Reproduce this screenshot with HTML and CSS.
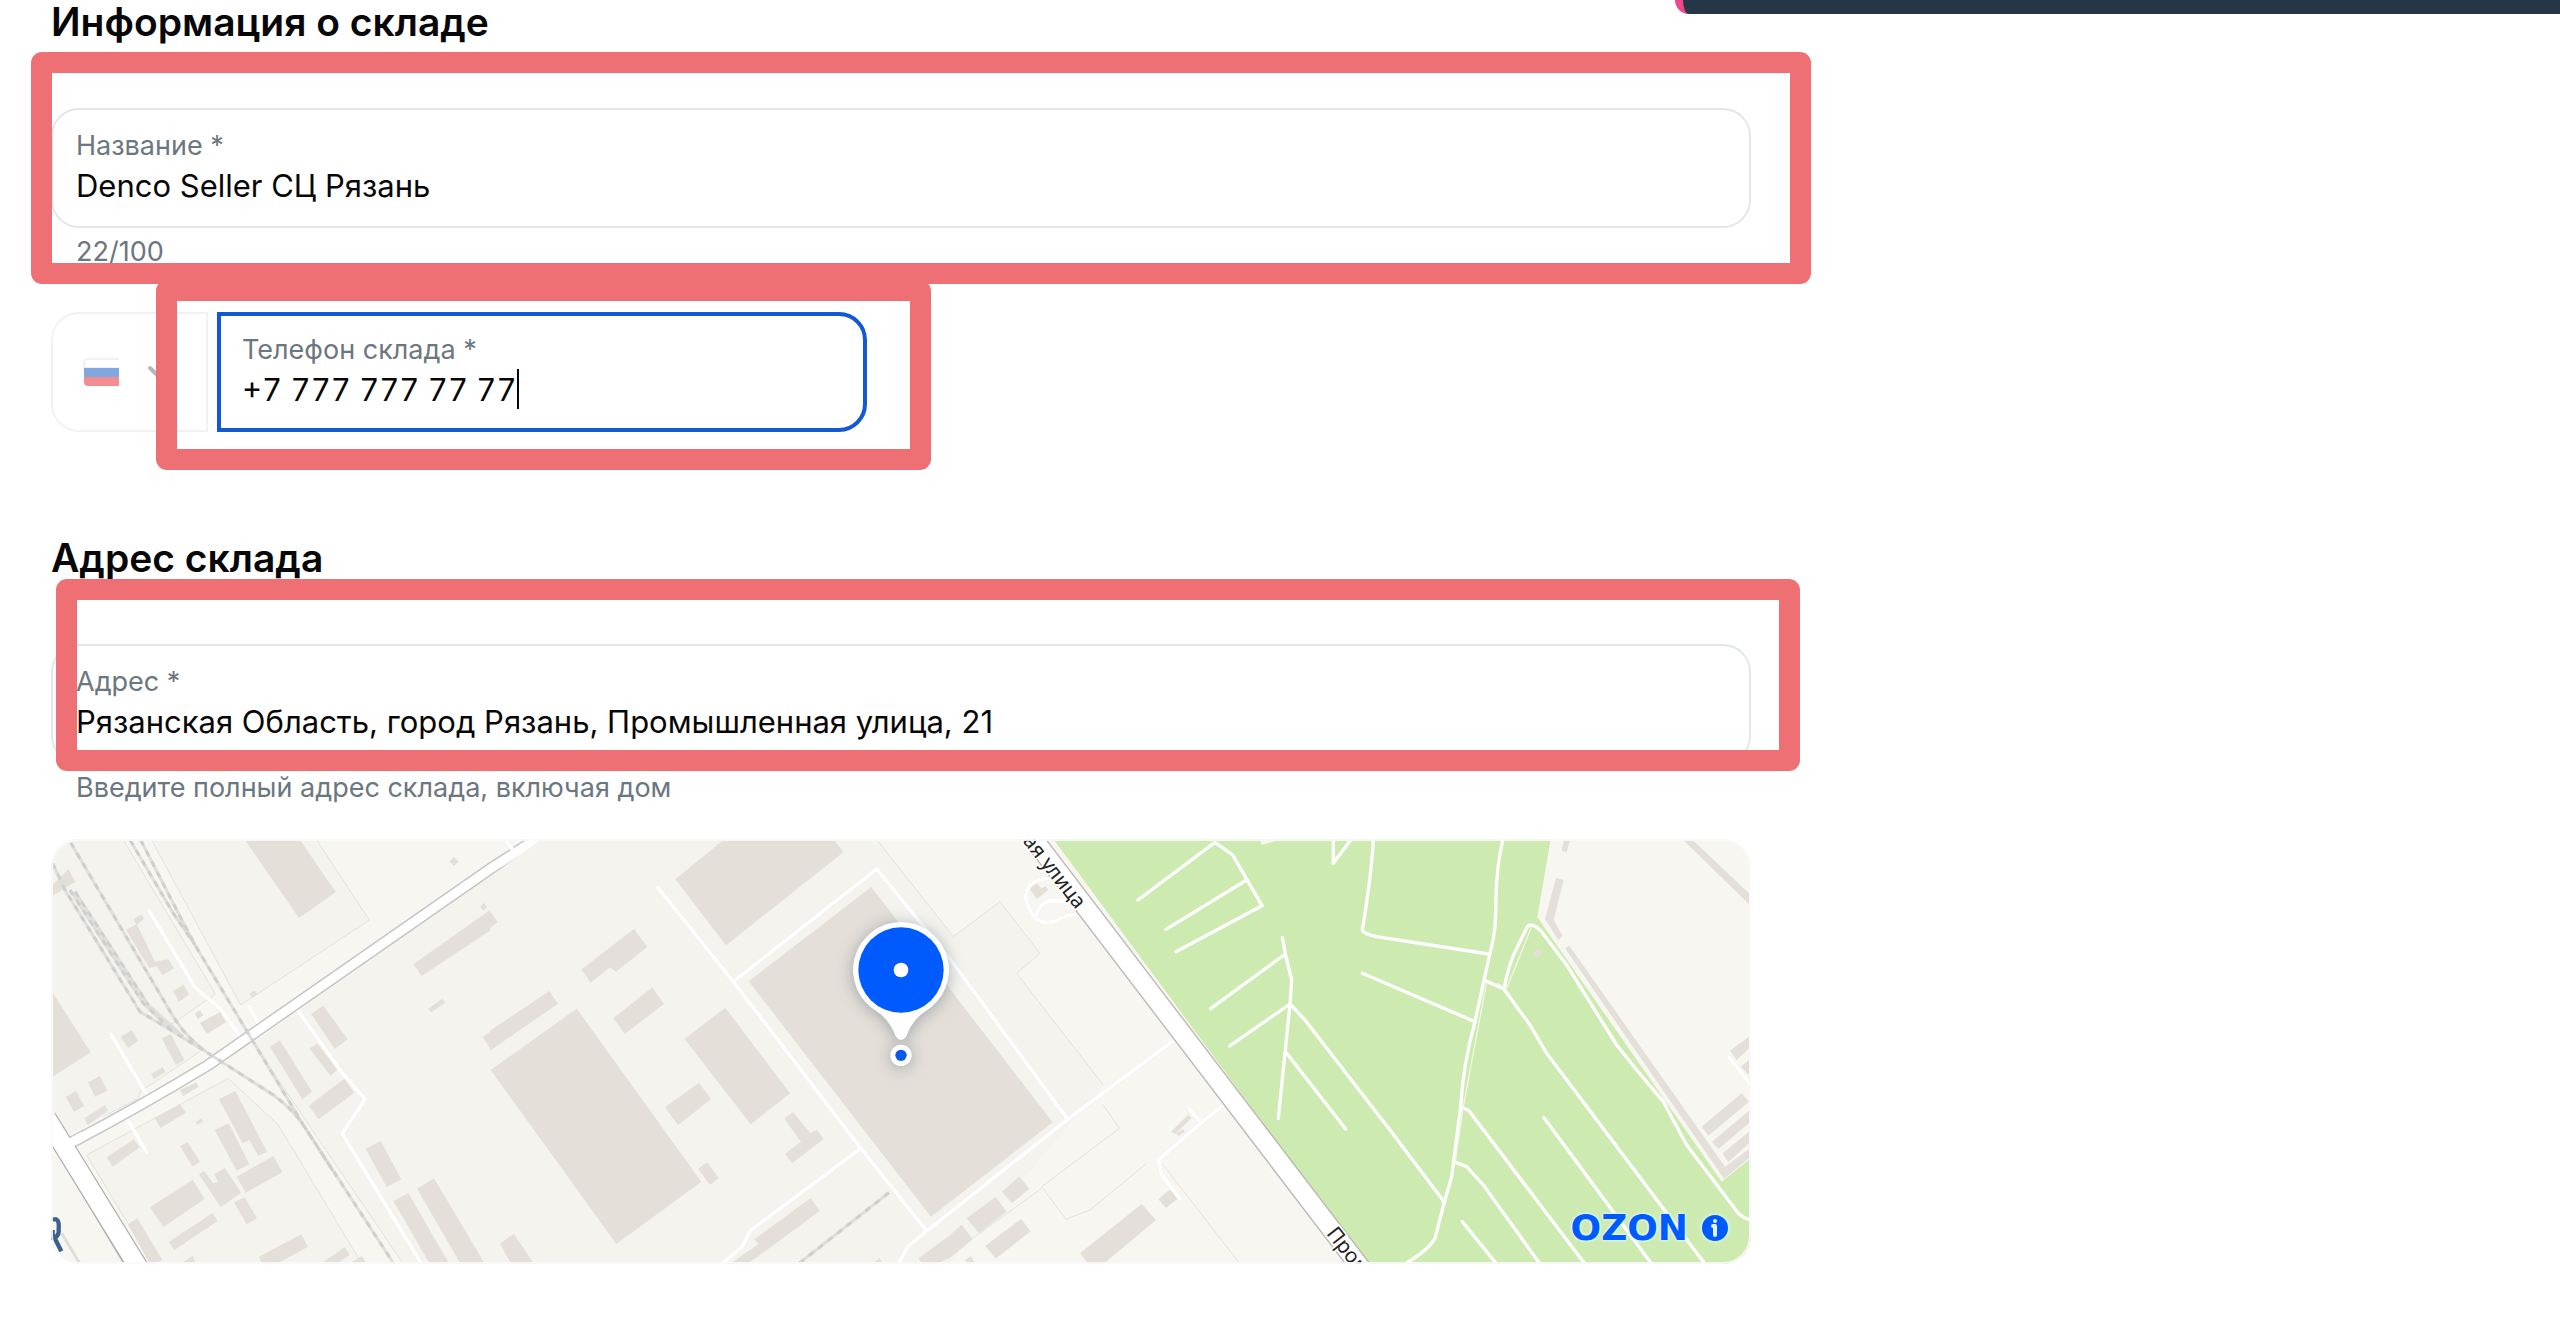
FILE: index.html
```
<!DOCTYPE html>
<html lang="ru">
<head>
    <meta charset="UTF-8">
    <meta name="viewport" content="width=device-width, initial-scale=1.0">
    <title>Информация о складе</title>
    <link rel="stylesheet" href="styles.css">
</head>
<body>
    <div class="toast"></div>

    <main class="warehouse">
        <section class="info">
            <h2>Информация о складе</h2>

            <div class="name-block">
                <div class="field">
                    <label for="name">Название *</label>
                    <input type="text" id="name" value="Denco Seller СЦ Рязань">
                </div>
                <p class="hint">22/100</p>
                <div class="mark mark-name"></div>
            </div>

            <div class="phone-row">
                <button type="button" class="country" aria-label="Код страны">
                    <svg class="flag" viewBox="0 0 36 28">
                        <path d="M36 1H5Q1 1 1 5V10H36" fill="#fff" stroke="#e3e8ec" stroke-width="2"/>
                        <rect x="1" y="10" width="35" height="9" fill="#0551c3"/>
                        <path d="M1 19H36V28H5Q1 28 1 24Z" fill="#ea1e28"/>
                    </svg>
                    <svg class="chevron" viewBox="0 0 22 14">
                        <path d="M3 3L11 11L19 3" fill="none" stroke="#6a747c" stroke-width="4" stroke-linecap="round"/>
                    </svg>
                </button>
                <div class="field phone">
                    <label for="phone">Телефон склада *</label>
                    <div class="phone-value">
                        <input type="tel" id="phone" value="+7 777 777 77 77">
                        <span class="caret"></span>
                    </div>
                </div>
                <div class="mark mark-phone"></div>
            </div>
        </section>

        <section class="address">
            <h2>Адрес склада</h2>

            <div class="address-block">
                <div class="field">
                    <label for="address">Адрес *</label>
                    <input type="text" id="address" value="Рязанская Область, город Рязань, Промышленная улица, 21">
                </div>
                <div class="mark mark-address"></div>
            </div>
            <p class="hint">Введите полный адрес склада, включая дом</p>

            <div class="map">
                <svg class="map-canvas" viewBox="33 27 5100 1275" preserveAspectRatio="xMidYMid slice">
                    <!-- west: rail yard and old quarter -->
                    <g>
                        <path class="lot" d="M33 27H250L526 492L400 580L480 665L300 785L295 805L90 912L33 845Z"/>
                        <path class="lot" d="M335 27H830L988 270L602 525Z"/>
                        <path class="lot" d="M140 975L565 745L715 885L965 1302H330Z"/>
                        <path class="lot" d="M640 640L1350 130H1800V1302H1090Z"/>
                        <path class="lot-line" d="M250 30L526 492L400 580Q370 580 350 560M335 30L602 525L988 270L830 30M480 665L300 785L295 805L190 860M140 975L565 745L715 885L965 1300M140 975L330 1290M640 640L1090 1302"/>
                        <path class="house" d="M615 30H780L887 186L777 264ZM38 165L85 118L106 155L38 197ZM38 488L152 667L38 740ZM258 300L290 282L345 395L370 390L385 388L402 415L368 436L350 408L328 415ZM280 268L304 253L312 266L290 285ZM399 483L430 464L447 492L417 516ZM464 550L480 541L490 556L474 568ZM480 578L540 547L558 577L500 612ZM243 620L275 600L295 632L264 655ZM365 625L392 612L433 690L408 706ZM333 732L368 712L376 726L342 748ZM144 757L180 738L202 782L165 800ZM77 801L108 782L132 828L102 845ZM133 865L195 825L204 842L143 886ZM420 780L468 757L476 770L430 798ZM344 865L420 822L438 848L362 893ZM466 876L484 865L489 874L474 884ZM628 492L644 481L652 492L637 504ZM537 808L586 783L681 965L655 978L628 930L608 940ZM524 900L566 880L628 1003L590 1022ZM420 948L443 937L480 995L458 1010ZM200 982L282 928L299 952L218 1010ZM590 1040L700 978L727 1027L617 1088ZM477 1033L492 1023L520 1060L535 1055L522 1032L555 1015L603 1088L542 1132ZM582 1117L614 1102L651 1165L620 1183ZM330 1132L458 1049L494 1107L370 1191ZM387 1235L518 1149L533 1173L402 1261ZM264 1182L292 1165L367 1290L345 1302H330ZM657 1280L784 1213L804 1250L710 1302H665ZM845 1300L914 1252L930 1275L890 1302ZM425 1300L458 1277L468 1300ZM930 1300L965 1278L980 1300ZM690 650L720 631L816 785L787 808ZM808 655L832 641L893 718L872 738ZM813 551L850 527L923 628L884 656ZM806 827L913 746L943 788L836 868ZM1120 403L1350 240V302L1145 438ZM1164 537L1207 506L1216 518L1174 547ZM1228 95L1242 81L1256 95L1242 108ZM1320 230L1332 219L1342 232L1330 242ZM977 957L1022 933L1084 1048L1040 1071ZM1060 1113L1105 1089L1228 1302H1170ZM1131 1076L1182 1045L1335 1302H1262ZM1328 620L1373 590L1385 610L1350 655Z"/>
                        <path class="lane" d="M328 243L465 472L545 540L600 620M213 613L325 802M260 865L320 966M627 530L655 580M768 533L903 725L975 807L907 911L1145 1302"/>
                        <path class="road-edge" d="M33 905L275 1310M90 940Q300 830 505 705L1350 117L1500 20"/>
                        <path class="road-fill" d="M90 940Q300 830 505 705L1350 117L1500 20"/>
                        <path class="road-wide-edge" d="M20 865L300 1320"/>
                        <path class="road-wide" d="M20 865L300 1320"/>
                        <path class="road-fill" d="M70 950L130 918"/>
                        <path class="rail" d="M92 38L400 560Q440 625 505 670M270 30L400 250L465 345M302 30L410 240L465 345L790 885L1062 1302M38 100L75 180L300 545L400 605L505 670L700 795Q760 840 790 885L890 1040M90 180L310 520L400 605M105 185L325 525L430 620M65 1210L120 1302"/>
                        <path class="rail-dash" d="M92 38L400 560Q440 625 505 670M270 30L400 250L465 345M302 30L410 240L465 345L790 885L1062 1302M38 100L75 180L300 545L400 605L505 670L700 795Q760 840 790 885L890 1040M90 180L310 520L400 605M105 185L325 525"/>
                        <path d="M33 1168H48Q58 1172 56 1195V1205Q56 1222 33 1224M42 1220L64 1264M38 1200V1230" fill="none" stroke="#3b628f" stroke-width="13"/>
                    </g>

                    <!-- centre: warehouses -->
                    <g transform="translate(1350 0)">
                        <path class="lot" d="M0 140L150 30H1165L1390 320L1530 215L1650 370L1580 430L1840 765L1380 1302H0Z"/>
                        <path class="lot-line" d="M1165 35L1390 320L1530 215L1650 370L1580 430L1840 765"/>
                        <path class="house" d="M556 148L700 30H1032L1060 67L708 346ZM776 454L1144 171L1688 877L1323 1160ZM2 720L260 536L634 1055L379 1242ZM584 627L706 533L900 790L782 883ZM275 418L432 297L472 351L378 425L360 412L302 458ZM370 565L487 472L522 522L404 612ZM525 832L627 758L663 808L564 885ZM0 602L178 483L204 521L0 662ZM0 243L23 276L0 294ZM624 1016L652 997L686 1045L660 1064ZM883 866L909 846L960 910L981 899L1001 927L906 1000L885 971L933 935ZM793 1228L962 1104L989 1143L800 1282L770 1302H720L805 1242ZM30 1241L71 1211L132 1302H64ZM1286 1285L1380 1215L1415 1184L1448 1228L1380 1283L1340 1302H1295ZM1430 1165L1517 1101L1550 1145L1467 1209ZM1536 1085L1588 1040L1618 1076L1566 1120ZM1486 1247L1593 1167L1622 1204L1517 1286ZM1770 1270L1955 1122L1998 1170L1840 1302H1795ZM2005 1108L2040 1078L2065 1105L2028 1134ZM2043 905L2095 854L2105 864L2055 912ZM2058 910L2080 897L2085 905L2065 918ZM1618 175L1640 160L1655 175L1668 168L1675 180L1640 207ZM1425 1290L1443 1278L1455 1302H1430ZM1155 1295L1168 1285L1180 1300Z"/>
                        <path class="lane" d="M503 172L730 455L1112 955L1310 1203M730 455L1160 117L1390 400L1733 868M1112 955L780 1203L757 1250L695 1302M1225 1302L1255 1248L1310 1203L1733 868L2055 628M50 35L65 55"/>
                        <path class="rail" d="M1197 1088L925 1302"/>
                        <path class="rail-dash" d="M1197 1088L925 1302"/>
                        <path class="lot-line" d="M1840 825L1888 895L1655 1070L1728 1168L1800 1140L1970 1000M2020 1005L2250 1302M1655 1075L1400 1260"/>
                    </g>

                    <!-- Промышленная улица and the park -->
                    <g transform="translate(2700 0)">
                        <path class="park" d="M340 27L1280 1302H2433V985L2345 1055L1792 262L1832 27Z"/>
                        <path class="lane" d="M330 145Q255 150 258 205Q262 240 290 268Q320 285 350 272Q385 250 420 253M285 262Q300 220 325 213H385M850 825L790 873L655 990L665 1035L720 1106M748 838L785 878"/>
                        <path class="street-edge" d="M260 0L1275 1330"/>
                        <path class="street" d="M260 0L1275 1330"/>
                        <path class="path" d="M594 210L825 37L878 75L966 227L708 365M920 150L678 298M1027 322L1036 372L1055 450L1050 522L1015 865M1036 372L812 536M1050 522L869 648M1050 522L1095 570L1350 900L1512 1115M1040 670L1217 897M1300 27Q1295 130 1267 300Q1270 312 1310 320L1645 372M1267 430L1605 575M1180 100L1232 30M1180 100V30"/>
                        <path fill="#f7f6f1" d="M960 30H1015L965 45Z"/>
                    </g>
                    <g transform="translate(3900 0)">
                        <path class="house" d="M665 62L672 30H690L680 67ZM648 143L671 150L641 270L668 318L655 330L615 268ZM1030 30H1058L1227 190V223ZM675 355L688 347L1155 1010L1227 957V985L1152 1046ZM578 370L596 357L607 370L590 385ZM1085 890L1205 790L1227 815L1105 917ZM1116 935L1227 842V880L1135 957ZM1148 970L1227 905V940L1165 997ZM1170 662L1227 620V655L1190 690ZM1202 710L1227 690V735Z"/>
                        <path class="lane" d="M1168 683L1230 762"/>
                        <path class="path" d="M488 30Q470 110 468 200Q468 290 458 335L432 450L405 575Q370 700 362 830L335 1040L312 1120L285 1225Q265 1260 195 1302M432 450L492 478Q505 400 535 345L562 290Q575 275 605 305L680 405L830 645L890 720L970 815L1040 945L1195 1150Q1215 1168 1230 1168M492 478L570 585L620 670L1095 1302M362 832L385 840L735 1302M340 995L380 1010L430 1065L600 1302M612 863L935 1302M367 1175L470 1302"/>
                        <path d="M440 455L370 830L345 1000M575 290L500 475L470 460" fill="none" stroke="#f1f6e6" stroke-width="4"/>
                    </g>
                    <g class="street-name">
                        <text transform="translate(3108 240) rotate(52)" text-anchor="end">Промышленная улица</text>
                        <text transform="translate(3857 1211) rotate(52)">Промышленная улица</text>
                    </g>
                </svg>

                <svg class="pin" viewBox="0 0 330 480">
                    <path d="M165 27A144 144 0 0 1 238 295C210 315 195 335 181 370Q165 392 149 370C135 335 120 315 92 295A144 144 0 0 1 165 27Z" fill="#fff"/>
                    <circle cx="165" cy="171" r="128" fill="#005bff"/>
                    <circle cx="165" cy="171" r="22" fill="#fff"/>
                    <circle cx="165" cy="427" r="32" fill="#fff"/>
                    <circle cx="165" cy="427" r="17" fill="#0a58e6"/>
                </svg>

                <div class="copyright">
                    <a href="#" class="ozon">OZON</a>
                    <button type="button" class="about" aria-label="О карте">
                        <svg viewBox="0 0 26 26">
                            <circle cx="13" cy="13" r="13" fill="#005bff"/>
                            <circle cx="13" cy="6" r="2" fill="#dff6ee"/>
                            <path d="M11 11H13V20" fill="none" stroke="#dff6ee" stroke-width="4" stroke-linecap="round" stroke-linejoin="round"/>
                        </svg>
                    </button>
                </div>
            </div>
        </section>
    </main>
</body>
</html>
```
FILE: styles.css
```
* {
    margin: 0;
    padding: 0;
    box-sizing: border-box;
}

body {
    font-family: Inter, 'Noto Sans', sans-serif;
    background: #fff;
    color: #070707;
    position: relative;
    overflow-x: hidden;
}

.toast {
    position: absolute;
    top: 0;
    right: 0;
    left: 1675px;
    height: 14px;
    background: #253647;
    border-left: 8px solid #f0468c;
    border-radius: 0 0 0 14px;
}

.warehouse {
    max-width: 1751px;
    padding-left: 51px;
}

h2 {
    font-size: 39px;
    font-weight: 600;
    line-height: 44px;
    margin-bottom: 64px;
}

.field {
    display: flex;
    flex-direction: column;
    padding: 18px 23px 20px;
    border: 2px solid #e2e7eb;
    border-radius: 28px;
}

label,
.hint {
    font-size: 27px;
    line-height: 36px;
    color: #6b7780;
}

.hint {
    padding: 0 25px;
    margin-top: 6px;
}

input {
    width: 100%;
    height: 42px;
    font: inherit;
    font-size: 31px;
    color: #070707;
    background: none;
    border: none;
    outline: none;
}

.name-block,
.address-block,
.phone-row {
    position: relative;
}

/* Phone */
.phone-row {
    display: flex;
    gap: 9px;
    width: 48%;
    margin-top: 42px;
}

.country {
    display: flex;
    align-items: center;
    gap: 28px;
    width: 157px;
    padding-left: 30px;
    background: none;
    border: 2px solid #e2e7eb;
    border-radius: 28px 0 0 28px;
    opacity: 0.5;
}

.flag {
    width: 36px;
    height: 28px;
}

.chevron {
    width: 22px;
    height: 14px;
}

.phone {
    flex: 1;
    padding: 16px 21px 18px;
    border: 4px solid #1459d2;
    border-radius: 0 28px 28px 0;
}

.phone-value {
    display: flex;
    align-items: center;
}

.phone-value input {
    width: auto;
    field-sizing: content;
    font-variant-numeric: tabular-nums;
    caret-color: transparent;
}

.caret {
    width: 2px;
    height: 40px;
    background: #070707;
}

.address {
    margin-top: 104px;
}

/* Highlight frames around the fields to fill in */
.mark {
    position: absolute;
    border: 21px solid #ef7074;
    border-radius: 11px;
    pointer-events: none;
}

.mark-name {
    inset: -56px -60px -14px -20px;
}

.mark-phone {
    inset: -32px -64px -38px 105px;
}

.mark-address {
    inset: -65px -49px -7px 5px;
}

/* Map */
.map {
    position: relative;
    height: 425px;
    margin-top: 33px;
    border-radius: 28px;
    overflow: hidden;
    background: #f7f6f1;
}

.map::after {
    content: '';
    position: absolute;
    inset: 0;
    border: 2px solid rgba(250, 250, 250, 0.9);
    border-radius: 28px;
    pointer-events: none;
}

.map-canvas {
    display: block;
    width: 100%;
    height: 100%;
}

.lot {
    fill: #f4f3ee;
}

.lot-line {
    fill: none;
    stroke: #e2e2dc;
    stroke-width: 3;
}

.house {
    fill: #e4dfd8;
}

.park {
    fill: #cdebb0;
}

.lane {
    fill: none;
    stroke: #fff;
    stroke-width: 12;
    stroke-linecap: round;
    stroke-linejoin: round;
    filter: drop-shadow(0 0 2px #d8d6d0);
}

.path {
    fill: none;
    stroke: #fff;
    stroke-width: 10;
    stroke-linecap: round;
    stroke-linejoin: round;
}

.road-edge {
    fill: none;
    stroke: #c6c5c5;
    stroke-width: 36;
}

.road-fill {
    fill: none;
    stroke: #fff;
    stroke-width: 27;
}

.road-wide-edge {
    fill: none;
    stroke: #adacab;
    stroke-width: 62;
}

.road-wide {
    fill: none;
    stroke: #fff;
    stroke-width: 55;
}

.street-edge {
    fill: none;
    stroke: #b9b6b6;
    stroke-width: 62;
}

.street {
    fill: none;
    stroke: #fff;
    stroke-width: 54;
}

.rail {
    fill: none;
    stroke: #dededb;
    stroke-width: 9;
}

.rail-dash {
    fill: none;
    stroke: #cfcfcd;
    stroke-width: 9;
    stroke-dasharray: 18 18;
}

.street-name {
    font-family: 'Noto Sans', sans-serif;
    font-size: 62px;
    fill: #222;
    stroke: #fff;
    stroke-width: 10;
    paint-order: stroke;
}

.pin {
    position: absolute;
    top: 74px;
    left: 50%;
    width: 110px;
    height: 160px;
    margin-left: -55px;
    filter: drop-shadow(0 2px 8px rgba(0, 30, 60, 0.3));
}

.copyright {
    position: absolute;
    right: 23px;
    bottom: 23px;
    display: flex;
    align-items: center;
    gap: 14px;
}

.ozon {
    font-family: 'DejaVu Sans', sans-serif;
    font-size: 36px;
    font-weight: bold;
    line-height: 26px;
    color: #005bff;
    text-decoration: none;
    text-shadow: 0 0 3px #dff6ff, 0 0 3px #dff6ff, 0 0 3px #dff6ff;
}

.about {
    width: 26px;
    height: 26px;
    background: none;
    border: none;
    border-radius: 50%;
    box-shadow: 0 0 3px 1px #dff6ff;
}

.about svg {
    display: block;
    width: 100%;
    height: 100%;
}
```
